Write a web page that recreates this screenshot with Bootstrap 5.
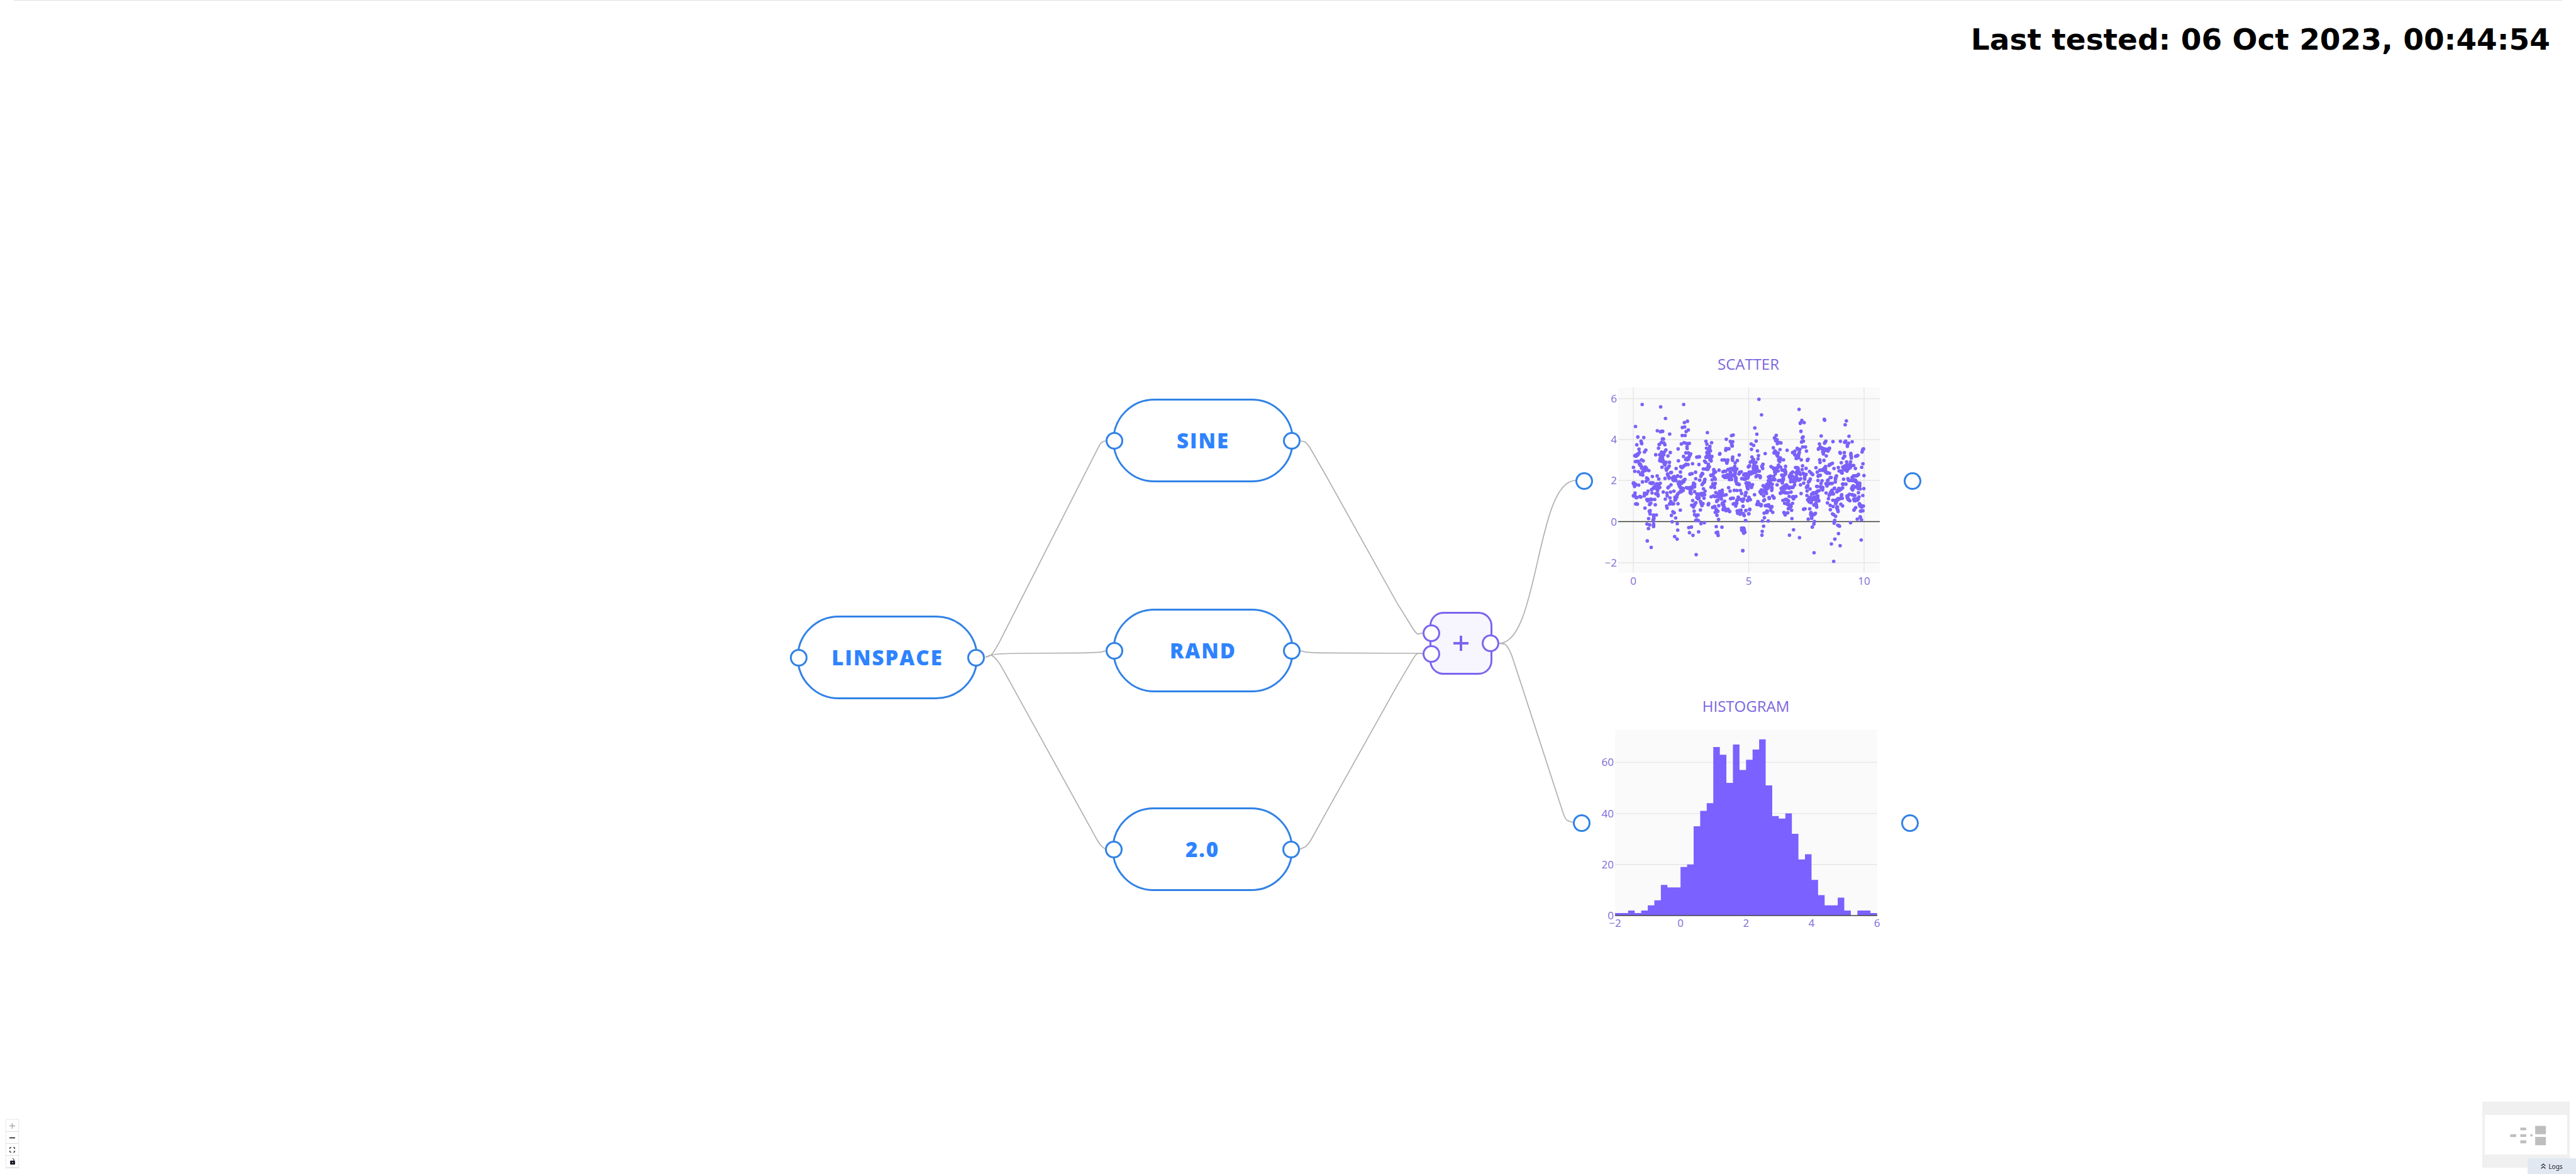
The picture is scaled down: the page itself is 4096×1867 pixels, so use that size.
<!DOCTYPE html>
<html lang="en">
<head>
<meta charset="utf-8">
<meta name="viewport" content="width=device-width, initial-scale=1">
<title>Flow editor</title>
<link href="https://cdn.jsdelivr.net/npm/bootstrap@5.3.0/dist/css/bootstrap.min.css" rel="stylesheet">
<style>
  :root { --blue: #2e83ff; --blue-line: #3182e6; --violet: #7b61ff; --violet-line: #7b65ee; }
  body { font-family: "Open Sans", "Noto Sans", sans-serif; background: #fff; }
  .flow { min-height: 100vh; }
  .top-rule { height: 1px; margin: 0 22px; background: #e0e0e0; }
  .tested { font: bold 47px/56px "DejaVu Sans", sans-serif; color: #000; padding: 34px 41px 0 0; }
  .edges { left: 0; top: 0; width: 4096px; height: 1867px; fill: none; stroke: #b1b1b1; pointer-events: none; }
  .node { position: absolute; display: flex; align-items: center; justify-content: center; }
  .pill { width: 288px; height: 133px; border: 3px solid var(--blue-line); border-radius: 67px; color: var(--blue); font-size: 33px; line-height: 40px; font-weight: 800; letter-spacing: 2px; }
  .operator { width: 100px; height: 100px; border: 3px solid var(--violet-line); border-radius: 22px; background: #f7f5fe; color: var(--violet-line); }
  .chart-node { width: 522px; height: 409px; }
  .port { position: absolute; top: 50%; width: 28px; height: 28px; padding: 0; border: 3px solid var(--blue-line); border-radius: 50%; background: #fff; transform: translate(-50%, -50%); }
  .port-in { left: 0; } .port-out { left: 100%; }
  .operator .port { border-color: var(--violet-line); }
  .port-a { top: 33%; } .port-b { top: 68%; }
  .chart-node text { font-size: 17px; fill: #7d6bd8; }
  .chart-node .chart-title { font-size: 24px; fill: #7b66dd; }
  .controls { position: absolute; left: 10px; bottom: 10px; width: 19px; box-shadow: 0 0 2px 1px rgba(0,0,0,.1); }
  .controls button { height: 19px; padding: 0; border: 0; border-bottom: 1px solid #ddd; border-radius: 0; background: #fefefe; color: #10101c; line-height: 1; display: flex; align-items: center; justify-content: center; }
  .minimap { position: absolute; right: 10px; bottom: 10px; width: 139px; height: 105px; }
  .logs { position: absolute; right: 0; bottom: 0; width: 77px; height: 25px; padding: 0; border: 0; border-radius: 0; background: #e1e8f1; color: #1a202c; font: 10px/16px "Noto Sans", sans-serif; }
</style>
<script src="https://cdn.jsdelivr.net/npm/bootstrap@5.3.0/dist/js/bootstrap.bundle.min.js"></script>
</head>
<body>
<main class="flow position-relative overflow-hidden">
  <div class="top-rule"></div>
  <header class="d-flex justify-content-end"><div class="tested">Last tested: 06 Oct 2023, 00:44:54</div></header>

  <svg class="edges position-absolute" viewBox="0 0 5900 2690" aria-hidden="true">
    <g stroke-width="2.5">
    <path d="M2257 1506L2270 1501Q2277 1493 2290 1469L2515 1026Q2519 1017 2524 1013L2532 1010"/>
    <path d="M2257 1506L2270 1501Q2285 1497 2340 1497L2480 1496Q2515 1495 2523 1494L2532 1491"/>
    <path d="M2257 1506L2270 1501Q2282 1507 2295 1530L2513 1925Q2519 1935 2524 1940L2532 1946"/>
    <path d="M2979 1010L2990 1013Q2995 1018 3001 1027L3040 1095L3200 1382L3233 1435Q3241 1449 3247 1453L3260 1450"/>
    <path d="M2979 1491L2990 1494Q3000 1496 3040 1496L3247 1497L3260 1498"/>
    <path d="M2977 1946L2990 1940Q2997 1934 3004 1922L3040 1857L3200 1571L3235 1512Q3243 1499 3247 1497L3260 1498"/>
    <path d="M3434 1474C3525 1474 3518 1101 3609 1101"/>
    <path d="M3434 1474L3447 1476Q3454 1480 3463 1503L3488 1579L3580 1862Q3586 1879 3590 1880L3604 1885"/>
    </g>
  </svg>

  <section class="node pill" style="left:1267px;top:979px">LINSPACE<button class="port port-in" aria-label="Linspace input"></button><button class="port port-out" aria-label="Linspace output"></button></section>
  <section class="node pill" style="left:1769px;top:634px">SINE<button class="port port-in" aria-label="Sine input"></button><button class="port port-out" aria-label="Sine output"></button></section>
  <section class="node pill" style="left:1769px;top:968px">RAND<button class="port port-in" aria-label="Rand input"></button><button class="port port-out" aria-label="Rand output"></button></section>
  <section class="node pill" style="left:1768px;top:1284px">2.0<button class="port port-in" aria-label="Constant input"></button><button class="port port-out" aria-label="Constant output"></button></section>
  <section class="node operator" style="left:2273px;top:973px" aria-label="Add">
    <svg width="24" height="24" viewBox="0 0 24 24" stroke="currentColor" stroke-width="4"><path d="M0 12H24M12 0V24"/></svg>
    <button class="port port-in port-a" aria-label="First operand"></button><button class="port port-in port-b" aria-label="Second operand"></button><button class="port port-out" aria-label="Sum"></button>
  </section>
  <section class="node chart-node" style="left:2519px;top:560px"><svg id="scatter" width="522" height="409" viewBox="0 0 522 409"></svg><button class="port port-in" aria-label="Scatter input"></button><button class="port port-out" aria-label="Scatter output"></button></section>
  <section class="node chart-node" style="left:2515px;top:1104px"><svg id="histogram" width="522" height="409" viewBox="0 0 522 409"></svg><button class="port port-in" aria-label="Histogram input"></button><button class="port port-out" aria-label="Histogram output"></button></section>

  <nav class="controls d-flex flex-column" aria-label="Zoom controls">
    <button aria-label="Zoom in"><svg width="9" height="9" viewBox="0 0 12 12" stroke="#a6a6a6" stroke-width="1.8"><path d="M0 6H12M6 0V12"/></svg></button>
    <button aria-label="Zoom out"><svg width="9" height="9" viewBox="0 0 12 12" stroke="currentColor" stroke-width="2"><path d="M0 6H12"/></svg></button>
    <button aria-label="Fit view"><svg width="9" height="9" viewBox="0 0 12 12" fill="none" stroke="currentColor" stroke-width="1.6"><path d="M1 4V2Q1 1 2 1H4M8 1H10Q11 1 11 2V4M11 8V10Q11 11 10 11H8M4 11H2Q1 11 1 10V8"/></svg></button>
    <button aria-label="Lock"><svg width="8" height="10" viewBox="0 0 10 13" fill="currentColor"><path fill-rule="evenodd" d="M1 5H7V3Q7 1.500 4.500 1V0Q8 0 8.300 3V5H9Q10 5 10 6V12Q10 13 9 13H1Q0 13 0 12V6Q0 5 1 5ZM5 7.700A1.200 1.200 0 1 0 5 10.100A1.200 1.200 0 1 0 5 7.700Z"/></svg></button>
  </nav>
  <svg class="minimap" viewBox="0 0 200 150" preserveAspectRatio="none" aria-label="Mini map">
    <path fill="#f0f0f0" d="M0 0H200V150H0Z"/><path fill="#fff" d="M6 30H194V120H6Z"/>
    <path fill="#bebebe" d="M64 74H77.500V80.500H64ZM87 59H100.500V65H87ZM87 74H100.500V80H87ZM87 88H100.500V94.500H87ZM110 74H115V79H110ZM121 55H145.500V74H121ZM121 80H145.500V99H121Z"/>
  </svg>
  <button class="logs d-flex align-items-center justify-content-center gap-1"><svg width="8" height="9" viewBox="0 0 10 12" fill="none" stroke="currentColor" stroke-width="1.700"><path d="M.5 5.500L5 1.500L9.500 5.500M.5 11L5 7L9.500 11"/></svg>Logs</button>
</main>
<script>
const NS = 'http://www.w3.org/2000/svg';
function add(parent, name, attrs, text) {
  const el = document.createElementNS(NS, name);
  for (const key in attrs) el.setAttribute(key, attrs[key]);
  if (text !== undefined) el.textContent = text;
  return parent.appendChild(el);
}
const line = (svg, x1, y1, x2, y2, color) => add(svg, 'line', { x1, y1, x2, y2, stroke: color, 'stroke-width': 1.4 });
const label = (svg, x, y, anchor, text) => add(svg, 'text', { x, y, 'text-anchor': anchor }, text);
const title = (svg, text) => add(svg, 'text', { x: 261, y: 28, 'text-anchor': 'middle', class: 'chart-title' }, text);
const parse = s => s.trim().split(/\s+/).map(p => p.split(',').map(Number));

/* Scatter: samples are stored on a fine raster, k plot pixels to a raster step. */
const k = 0.2314;
const left = parse(`213,140 340,156 498,140 373,236 503,264 524,255 167,291 489,298 505,294 317,320 338,327 347,324 354,324 402,343 515,326 530,315 661,333 488,353 508,353 183,363 224,367 352,377 359,377 345,400 362,404 369,416 333,413 329,415 205,392 207,400 210,409 176,417 325,440 482,411 500,402 516,407 537,407 527,411 521,432 522,442 460,445 191,447 238,453 229,466 194,469 187,478 183,486 162,492 169,495 174,493 180,481 171,487 306,485 333,485 345,467 354,469 366,466 376,452 406,470 356,478 361,485 347,493 351,501 390,493 353,509 337,510 334,527 343,523 357,526 348,531 336,520 352,515 400,537 376,537 364,545 371,550 349,571 369,556 395,570 387,577 399,562 380,591 377,581 446,580 478,567 490,572 486,574 503,559 515,550 528,553 498,563 511,556 462,527 497,497 513,472 530,472 546,479 541,489 537,496 531,505 532,515 523,520 512,518 527,510 518,511 559,547 588,502 606,499 597,500 603,552 642,529 649,537 668,551 665,567 674,568 633,583 647,583 656,583 663,586 667,580 651,393 658,412 690,402 678,427 655,440 677,439 682,458 671,447 662,466 658,471 673,479 668,486 655,498 666,503 678,497 692,497 685,513 679,521 687,528 661,490 668,472 679,507 651,503 791,379 827,354 838,350 819,394 835,396 827,405 832,422 828,418 831,426 809,444 787,454 789,443 797,446 747,477 745,481 762,521 777,520 801,521 798,531 795,543 794,536 787,524 880,487 835,501 833,514 834,523 867,525 852,541 849,565 850,579 863,583 837,580 823,580 807,585 802,587 778,598 786,599 768,602 741,591 705,587 711,599 706,597 704,614 698,624 687,628 708,641 694,657 685,625 166,532 185,530 208,520 220,527 178,531 193,542 200,551 206,562 197,553 212,572 220,580 234,570 242,579 233,583 226,590 232,594 247,590 259,594 218,602 212,612 217,625 202,620 214,605 223,598 238,574 153,572 162,599 187,602 193,547 209,577 199,557 283,635 316,631 327,652 244,644 253,655 241,667 249,650 215,672 154,678 163,685 170,690 189,694 161,703 157,690 152,682 267,679 273,679 285,679 290,680 278,683 277,679 315,685 337,681 327,690 327,694 310,694 315,700 299,704 308,708 317,712 293,715 286,718 277,725 315,724 325,710 334,710 319,730 299,710 309,699 322,719 295,707 304,713 253,735 281,748 229,749 245,752 241,755 307,753 318,752 322,768 322,761 228,765 227,768 164,748 162,760 153,767 154,768 171,777 178,778 198,772 204,776 172,780 245,793 255,792 270,792 280,792 299,792 251,802 256,795 272,790 272,817 264,828 267,823 303,829 168,824 180,825 175,822 232,852 268,869 262,874 265,874 267,892 290,900 310,899 292,912 294,923 289,941 257,924 288,932 290,944 246,961 264,967 292,964 256,992 291,978 291,970 248,1077 275,1122 387,617 390,628 414,607 409,608 398,646 370,648 397,639 389,620 476,604 478,636 420,645 424,648 429,636 435,636 442,640 456,630 436,653 445,663 425,657 436,647 431,651 429,662 457,632 429,640 441,656 493,665 507,654 469,672 465,678 470,686 462,684 480,676 486,680 470,692 471,698 499,670 501,660 411,692 390,712 396,706 468,700 475,709 487,715 484,719 478,714 486,735 495,731 490,722 479,740 475,737 485,728 494,717 517,711 525,714 540,711 533,713 549,716 545,723 551,708 560,702 566,680 567,689 570,690 566,698 573,706 574,688 549,711 554,719 557,715 543,747 543,733 549,752 573,739 545,741 541,717 358,741 383,748 408,742 431,735 385,767 372,790 404,782 438,777 450,768 456,757 464,748 440,787 446,782 443,792 451,776 438,797 409,807 413,815 420,822 424,822 429,822 404,822 416,820 411,811 459,822 401,824 381,838 384,852 475,866 424,877 433,884 414,902 443,920 419,946 454,959 457,1003 436,1047 453,1065 533,986 551,982 538,1021 562,1039 601,1015 584,1172 581,936 591,934 600,938 617,959 640,952 586,934 585,907 597,899 573,897 589,901 570,873 613,865 553,832 560,800 565,836 568,832 575,823 582,815 565,844 574,830 589,780 590,776 596,762 589,755 599,756 600,762 604,781 606,757 602,785 597,788 619,752 625,764 625,752 623,756 642,760 636,752 645,735 634,719 638,784 614,807 619,817 619,823 624,834 631,821 625,824 668,824 667,829 670,821 580,605 556,615 541,619 547,616 581,650 608,660 625,613 629,616 616,633 619,626 626,617 644,654 641,665 641,672 632,680 625,690 699,685 715,682 686,708 710,711 702,698 710,691 690,705 709,684 715,653 717,603 719,745 750,742 763,729 745,737 763,746 737,753 747,749 737,766 744,768 748,763 760,765 755,775 741,775 757,789 720,772 703,768 712,773 687,774 728,769 725,806 727,801 733,797 777,763 790,760 744,762 779,804 767,815 763,823 769,818 773,830 771,839 778,847 778,855 769,862 784,862 775,853 803,860 797,866 810,871 814,875 789,870 793,866 783,858 739,835 711,840 697,847 706,844 720,858 733,874 728,871 715,881 724,878 722,862 727,901 738,930 722,979 761,983 731,1017 722,1021 735,1040 732,1028 807,711 817,735 846,730 865,731 888,731 896,752 925,745 921,766 820,787 839,784 829,784 873,776 874,784 865,797 872,792 880,788 863,803 863,819 839,824 848,821 853,825 856,838 903,791 903,804 911,790 946,779 936,799 945,795 895,797 906,840 925,869 952,862 946,891 907,891 892,866 879,869 866,871 869,882 877,875 884,875 885,894 870,887 890,875 910,897 914,903 923,937 896,989 911,992 897,1004 910,1005 915,1012 910,1022 904,998 918,1018 908,1012 904,1144 818,602 823,613 813,624 826,633 831,626 801,622 795,627 787,628 777,632 770,632 790,641 804,637 807,641 817,655 827,655 780,641 796,633 812,655 842,628 852,615 851,608 849,620 846,631 856,641 858,651 856,662 854,645 878,617 881,611 883,605 894,602 885,608 858,670 863,685 869,687 880,690 872,685 917,617 926,617 911,624 902,650 923,652 914,653 940,637 932,637 936,641 933,617 939,644 897,649 927,681 938,680 949,681 935,695 934,699 938,709 940,719 945,695 937,688 807,637 822,626 792,628 854,597 839,590`);
const right = parse(`115,104 391,173 133,211 410,249 399,269 402,265 426,264 564,242 567,248 716,252 708,279 87,301 404,324 234,352 101,344 543,356 734,358 222,369 229,378 240,382 230,388 419,362 413,369 421,392 408,398 413,394 96,391 62,411 79,421 64,448 105,459 244,401 256,401 266,404 242,409 531,411 575,392 571,398 566,405 624,395 675,393 711,392 708,400 731,406 756,396 723,420 723,427 704,399 214,437 226,459 222,468 236,470 247,474 219,472 226,463 237,482 240,490 246,497 260,450 309,454 378,442 397,448 386,449 379,441 416,432 435,432 442,460 362,461 355,467 347,470 354,473 361,484 363,488 393,469 389,479 387,491 387,484 379,493 380,502 371,510 377,509 388,505 406,520 453,516 448,524 450,520 524,447 527,441 537,432 541,435 551,441 555,441 550,445 557,453 567,451 580,454 584,448 598,443 595,450 590,460 600,440 554,466 558,473 558,480 566,459 578,493 571,446 562,446 533,520 535,538 562,524 672,470 675,475 702,471 705,495 694,509 701,497 747,476 747,484 748,491 750,500 750,508 780,496 788,493 794,490 786,493 834,445 824,466 828,452 831,447 67,501 112,491 109,514 158,477 78,517 72,522 60,534 56,536 76,530 78,538 94,537 85,543 51,561 43,569 49,562 45,565 83,550 81,558 84,563 78,570 89,569 100,566 77,578 83,583 91,582 102,579 80,590 88,593 97,595 102,592 109,597 118,598 73,600 64,605 56,608 60,617 52,613 48,605 87,605 93,605 81,593 74,611 19,616 33,618 43,621 25,627 34,630 26,642 18,652 34,645 43,632 32,637 10,650 107,627 99,630 95,636 124,633 124,642 116,629 143,551 137,562 135,567 141,579 263,507 254,510 251,521 256,523 260,514 253,526 258,533 262,520 284,520 249,557 255,565 265,572 232,577 224,580 217,583 211,575 228,590 225,597 224,605 228,616 230,604 247,597 244,572 239,577 236,587 198,567 219,579 298,565 294,588 273,590 285,594 280,590 295,602 299,604 298,618 295,591 367,573 375,573 383,575 382,591 385,583 379,598 393,606 387,609 380,604 370,610 391,613 385,600 373,606 375,618 382,594 415,561 412,587 439,579 401,620 419,612 429,623 428,620 439,620 431,632 429,645 430,652 437,622 463,600 474,611 485,622 480,617 507,574 516,605 537,626 530,627 522,632 527,629 546,590 540,590 533,592 559,592 563,587 568,582 573,580 562,580 553,590 573,566 566,594 573,601 576,606 590,609 600,613 584,612 564,578 572,595 580,608 597,559 603,552 620,544 610,549 601,553 681,540 718,534 745,534 719,554 707,561 703,568 691,570 698,573 711,568 717,565 725,564 730,558 741,554 743,562 748,560 754,559 766,559 733,569 740,571 743,574 734,577 721,579 721,586 711,588 701,583 716,573 694,569 739,552 727,585 706,577 702,588 720,598 697,582 778,580 830,547 821,572 631,580 661,573 666,597 678,597 682,601 687,611 682,608 685,604 725,569 712,576 736,567 837,628 799,620 797,624 785,630 765,630 765,635 775,629 755,641 793,627 697,653 727,650 648,630 645,638 641,652 642,646 640,672 611,641 605,642 590,659 587,663 585,690 583,684 594,685 603,683 610,682 619,682 578,688 576,683 583,699 549,664 521,662 542,682 468,652 459,667 463,665 456,674 423,680 401,692 402,650 389,660 395,656 383,653 370,637 374,640 367,648 360,652 356,658 354,667 365,667 360,672 349,669 347,661 333,670 364,655 347,604 334,618 337,612 326,628 336,628 332,632 346,633 325,637 330,636 332,649 335,643 272,625 277,629 285,625 283,642 283,649 281,659 277,657 272,660 262,664 255,662 249,664 276,672 276,679 283,655 289,625 217,634 195,632 189,635 181,638 190,655 195,651 203,655 209,655 219,657 224,655 180,663 186,669 191,673 182,676 195,665 182,685 188,690 195,686 207,688 188,683 169,689 171,698 179,701 184,699 172,707 180,711 172,714 172,720 166,720 159,716 156,713 163,710 144,697 151,703 204,710 205,718 203,730 204,722 240,692 304,692 296,696 291,703 285,705 290,712 285,717 276,717 268,717 298,717 304,701 314,704 318,710 323,716 330,709 345,709 339,709 350,708 360,693 280,707 296,710 306,697 271,740 267,745 262,750 266,748 285,742 281,744 297,747 307,747 316,747 289,740 276,737 336,742 405,752 451,697 446,703 442,710 447,706 466,720 446,734 445,765 46,680 39,680 32,680 28,679 71,691 64,710 65,703 39,719 37,710 34,703 42,693 48,683 132,727 130,733 123,740 126,745 132,753 137,730 157,733 163,738 164,747 158,746 153,743 167,751 148,769 85,760 27,745 22,765 47,780 46,790 56,794 38,800 9,790 5,803 6,839 26,868 52,860 45,891 8,890 14,903 24,937 10,989 14,1000 10,1007 18,1017 11,1023 7,999 5,1144 108,807 107,818 101,827 115,825 129,835 112,816 122,826 131,828 108,828 148,801 154,795 185,780 187,786 186,783 209,769 217,779 219,783 161,835 169,835 174,831 182,829 184,840 192,844 204,841 202,846 161,835 196,867 210,881 171,871 171,882 151,886 163,882 172,876 153,918 139,940 179,940 147,976 138,1012 136,1038 323,772 302,791 280,799 296,794 319,803 310,797 292,819 312,819 307,823 318,824 323,831 332,831 336,841 324,849 330,845 317,856 313,827 322,852 346,819 345,777 352,784 355,780 369,772 353,788 350,773 340,867 313,884 287,882 296,899 292,891 290,884 342,924 353,1001 325,1038 394,1055 494,1159 629,1218 428,857 422,860 432,857 464,857 516,703 512,703 536,705 545,706 554,710 552,718 552,727 544,712 528,732 518,735 512,742 517,738 503,747 493,747 487,747 483,753 477,757 485,755 508,752 505,745 520,769 519,778 509,778 500,775 500,784 491,781 482,783 495,790 487,792 478,792 462,780 467,779 456,790 450,795 455,798 463,802 460,808 473,815 475,810 474,792 470,785 504,793 516,791 514,799 524,797 527,802 507,784 508,788 518,782 507,817 510,828 504,830 493,830 497,829 510,835 512,845 473,882 472,888 471,896 478,892 487,899 493,894 497,894 503,888 476,902 477,912 478,922 482,903 454,928 497,944 493,961 482,982 577,748 593,787 586,816 605,833 625,841 606,863 598,764 602,757 607,750 615,750 620,745 627,754 608,743 614,735 618,729 633,718 622,749 614,754 635,715 651,740 655,735 660,728 668,730 664,717 680,721 690,713 673,724 668,717 654,732 684,760 682,766 688,785 674,785 668,789 659,786 660,792 643,798 650,805 645,797 623,798 641,810 645,815 643,822 678,825 690,837 655,843 653,852 654,860 658,867 659,875 650,848 621,892 629,897 642,908 636,936 635,944 632,955 657,970 663,972 669,976 662,1027 637,1065 613,1098 673,1110 696,687 690,687 713,687 736,662 731,660 751,662 757,662 772,659 776,668 787,673 778,660 785,671 792,682 795,690 807,680 807,683 796,692 808,697 801,702 804,710 811,720 801,709 788,704 778,707 771,708 764,698 765,707 757,706 760,714 752,718 761,720 759,727 793,706 805,704 797,718 836,718 799,746 829,765 803,775 737,757 728,765 720,770 757,759 763,762 767,764 774,765 756,761 723,783 728,792 740,801 731,795 729,787 772,788 780,793 788,787 793,794 798,790 777,801 771,801 785,798 791,797 767,790 806,822 811,829 816,837 820,845 825,838 833,838 812,839 809,834 805,826 780,849 768,866 772,860 818,872 825,870 813,872 830,870 811,911 791,928 820,933 745,952 818,1071 813,918`);
const scatter = document.getElementById('scatter');
add(scatter, 'rect', { x: 54, y: 56, width: 416, height: 295, fill: '#fafafa' });
[[0, 78], [5, 261.5], [10, 445]].forEach(([v, x]) => { line(scatter, x, 56, x, 351, '#e6e6e6'); label(scatter, x, 370, 'middle', v); });
[[6, 74], [4, 139], [2, 204], [0, 269.5], ['−2', 335]].forEach(([v, y]) => { line(scatter, 54, y, 470, y, v === 0 ? '#3c3e37' : '#e6e6e6'); label(scatter, 52, y + 6, 'end', v); });
const dots = add(scatter, 'g', { fill: '#7b61f8' });
left.forEach(([x, y]) => add(dots, 'circle', { cx: 54 + (x - 48) * k, cy: 56 + (y - 22) * k, r: 2.8 }));
right.forEach(([x, y]) => add(dots, 'circle', { cx: 54 + (x + 852) * k, cy: 56 + (y - 22) * k, r: 2.8 }));
title(scatter, 'SCATTER');

/* Histogram: one count per bin of 0.2, from -2 to 6. */
const bins = [1,1,2,1,2,4,6,12,11,11,19,20,35,41,44,66,63,52,67,57,61,65,69,51,39,38,40,32,22,24,14,8,4,4,7,2,0,2,2,1];
const hist = document.getElementById('histogram'), base = 352, unit = 4.06, step = 10.415;
add(hist, 'rect', { x: 53, y: 56, width: 417, height: 296, fill: '#fafafa' });
[0, 20, 40, 60].forEach(v => { if (v) line(hist, 53, base - v * unit, 470, base - v * unit, '#e6e6e6'); label(hist, 51, base - v * unit + 6, 'end', v); });
let d = 'M53 ' + base;
bins.forEach((n, i) => { d += `V${base - n * unit}H${53 + (i + 1) * step}`; });
add(hist, 'path', { d: d + 'V' + base + 'Z', fill: '#7b61ff' });
line(hist, 53, base, 470, base, '#444');
['−2', 0, 2, 4, 6].forEach((v, i) => label(hist, 53 + i * 104.15, 370, 'middle', v));
title(hist, 'HISTOGRAM');
</script>
</body>
</html>
